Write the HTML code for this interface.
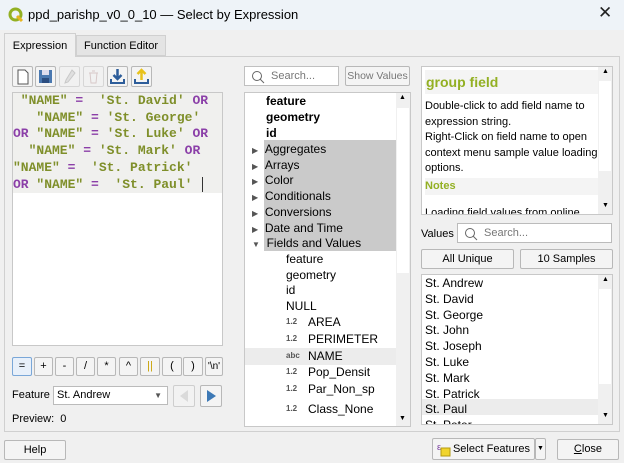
<!DOCTYPE html><html><head><style>
*{box-sizing:border-box;margin:0;padding:0}
body{width:624px;height:463px;overflow:hidden;background:#f0f0f0;font-family:"Liberation Sans",sans-serif;font-size:12px;color:#000;position:relative}
.a{position:absolute}
.btn{position:absolute;background:#f4f4f4;border:1px solid #b8b8b8;border-radius:2px;text-align:center;font-size:11px;white-space:nowrap;overflow:hidden}
.w{position:absolute;background:#fff;border:1px solid #c8c8c8}
.code{font-family:"Liberation Mono",monospace;font-size:13px;font-weight:bold;line-height:16.7px;white-space:pre;color:#7f8f2a}
.k{color:#8b3fa8}
.row{position:absolute;height:16px;line-height:16px;font-size:12px;white-space:nowrap}
.ico{font-size:8px;font-weight:bold;color:#555;display:inline-block;width:22px;vertical-align:top;line-height:15px}
</style></head><body>
<div class="a" style="left:0;top:0;width:624px;height:30px;background:#eef3f8"></div>
<svg class="a" style="left:8px;top:7px" width="16" height="16" viewBox="0 0 16 16"><circle cx="7.5" cy="7.5" r="5.5" fill="none" stroke="#93b023" stroke-width="3"/><path d="M9 9 L14 14" stroke="#e7b520" stroke-width="3"/></svg>
<div class="a" style="left:28px;top:7px;font-size:13px">ppd_parishp_v0_0_10 — Select by Expression</div>
<div class="a" style="left:598px;top:3px;font-size:17px;color:#222">✕</div>
<div class="a" style="left:4px;top:56px;width:616px;height:376px;border:1px solid #d0d0d0;background:#f0f0f0"></div>
<div class="a" style="left:4px;top:33px;width:72px;height:24px;background:#f0f0f0;border:1px solid #d0d0d0;border-bottom:none;font-size:11px;text-align:center;line-height:24px">Expression</div>
<div class="a" style="left:76px;top:35px;width:90px;height:21px;background:#e4e4e4;border:1px solid #d0d0d0;font-size:11px;text-align:center;line-height:21px">Function Editor</div>
<div class="btn" style="left:12px;top:66px;width:21px;height:21px"><svg width="19" height="19"><path d="M5 3h7l3 3v11H5z" fill="#fff" stroke="#555"/></svg></div>
<div class="btn" style="left:35px;top:66px;width:21px;height:21px"><svg width="19" height="19"><rect x="3" y="3" width="13" height="13" fill="#4a78b0"/><rect x="6" y="3" width="7" height="5" fill="#dde"/><rect x="6" y="11" width="7" height="5" fill="#2b4d80"/></svg></div>
<div class="btn" style="left:59px;top:66px;width:21px;height:21px;opacity:.45"><svg width="19" height="19"><path d="M12 3l3 3-7 9-3 1 1-3z" fill="#ccc" stroke="#999"/></svg></div>
<div class="btn" style="left:83px;top:66px;width:21px;height:21px;opacity:.45"><svg width="19" height="19"><path d="M5 6h9M6 6l1 10h5l1-10M8 4h3" fill="none" stroke="#b99"/></svg></div>
<div class="btn" style="left:107px;top:66px;width:21px;height:21px"><svg width="19" height="19"><path d="M9.5 2v9M5.5 8l4 4 4-4" fill="none" stroke="#2d5d9a" stroke-width="2.5"/><path d="M3 12v4h13v-4" fill="none" stroke="#2d5d9a" stroke-width="2"/></svg></div>
<div class="btn" style="left:131px;top:66px;width:21px;height:21px"><svg width="19" height="19"><path d="M9.5 13V4M5.5 7l4-4 4 4" fill="none" stroke="#e8c21c" stroke-width="2.5"/><path d="M3 12v4h13v-4" fill="none" stroke="#2d5d9a" stroke-width="2"/></svg></div>
<div class="w" style="left:12px;top:92px;width:211px;height:254px"></div>
<div class="a" style="left:13px;top:93px;width:209px;height:100px;background:#f0f0ee"></div>
<div class="a code" style="left:13px;top:93px"> "NAME" <span class="k">=</span>  'St. David' <span class="k">OR</span>
   "NAME" <span class="k">=</span> 'St. George'
<span class="k">OR</span> "NAME" <span class="k">=</span> 'St. Luke' <span class="k">OR</span>
  "NAME" <span class="k">=</span> 'St. Mark' <span class="k">OR</span>
"NAME" <span class="k">=</span>  'St. Patrick'
<span class="k">OR</span> "NAME" <span class="k">=</span>  'St. Paul' </div>
<div class="a" style="left:202px;top:177px;width:1px;height:15px;background:#333"></div>
<div class="btn" style="left:12px;top:357px;width:20px;height:19px;line-height:17px;border-color:#7aa7d8;background:#e8f0fa">=</div>
<div class="btn" style="left:34px;top:357px;width:19px;height:19px;line-height:17px">+</div>
<div class="btn" style="left:55px;top:357px;width:19px;height:19px;line-height:17px">-</div>
<div class="btn" style="left:76px;top:357px;width:19px;height:19px;line-height:17px">/</div>
<div class="btn" style="left:97px;top:357px;width:19px;height:19px;line-height:17px">*</div>
<div class="btn" style="left:119px;top:357px;width:19px;height:19px;line-height:17px">^</div>
<div class="btn" style="left:140px;top:357px;width:20px;height:19px;line-height:17px;color:#c8a000">||</div>
<div class="btn" style="left:162px;top:357px;width:20px;height:19px;line-height:17px">(</div>
<div class="btn" style="left:183px;top:357px;width:20px;height:19px;line-height:17px">)</div>
<div class="btn" style="left:205px;top:357px;width:18px;height:19px;line-height:17px;font-size:10px">'\n'</div>
<div class="a" style="left:12px;top:389px;font-size:11px">Feature</div>
<div class="w" style="left:53px;top:386px;width:115px;height:19px;border-color:#bbb;font-size:11px;line-height:17px;padding-left:3px">St. Andrew<span style="position:absolute;right:5px;top:0;font-size:8px;color:#555">▼</span></div>
<div class="btn" style="left:173px;top:385px;width:22px;height:22px;opacity:.6"><svg width="20" height="20"><path d="M14 4v12L6 10z" fill="#ccc"/></svg></div>
<div class="btn" style="left:200px;top:385px;width:22px;height:22px"><svg width="20" height="20"><path d="M6 4v12l9-6z" fill="#3d79b6"/></svg></div>
<div class="a" style="left:12px;top:413px;font-size:11px">Preview:&nbsp; 0</div>
<div class="btn" style="left:4px;top:440px;width:62px;height:20px;line-height:18px">Help</div>
<div class="w" style="left:244px;top:66px;width:95px;height:20px;border-color:#c0c0c0;color:#777;font-size:11px;line-height:18px;padding-left:26px">Search...<svg class="a" style="left:6px;top:3px" width="14" height="14"><circle cx="6" cy="6" r="4.5" fill="none" stroke="#666"/><path d="M9 9l4 4" stroke="#666"/></svg></div>
<div class="btn" style="left:345px;top:66px;width:65px;height:20px;line-height:18px;color:#777;font-size:10.5px">Show Values</div>
<div class="w" style="left:244px;top:92px;width:167px;height:335px"></div>
<div class="a" style="left:264px;top:140px;width:132px;height:111px;background:#cacaca"></div>
<div class="a" style="left:396px;top:93px;width:14px;height:333px;background:#f0f0f0"></div>
<div class="a" style="left:397px;top:108px;width:12px;height:165px;background:#fff"></div>
<div class="a" style="left:399px;top:94px;font-size:7px">▲</div>
<div class="a" style="left:399px;top:415px;font-size:7px">▼</div>
<div class="row" style="left:266px;top:93px;font-weight:bold">feature</div>
<div class="row" style="left:266px;top:109px;font-weight:bold">geometry</div>
<div class="row" style="left:266px;top:125px;font-weight:bold">id</div>
<div class="row" style="left:252px;top:141px"><span style="font-size:8px;color:#555">▶</span>&nbsp;&nbsp;Aggregates</div>
<div class="row" style="left:252px;top:157px"><span style="font-size:8px;color:#555">▶</span>&nbsp;&nbsp;Arrays</div>
<div class="row" style="left:252px;top:172px"><span style="font-size:8px;color:#555">▶</span>&nbsp;&nbsp;Color</div>
<div class="row" style="left:252px;top:188px"><span style="font-size:8px;color:#555">▶</span>&nbsp;&nbsp;Conditionals</div>
<div class="row" style="left:252px;top:204px"><span style="font-size:8px;color:#555">▶</span>&nbsp;&nbsp;Conversions</div>
<div class="row" style="left:252px;top:220px"><span style="font-size:8px;color:#555">▶</span>&nbsp;&nbsp;Date and Time</div>
<div class="row" style="left:252px;top:235px"><span style="font-size:8px;color:#555">▼</span>&nbsp;&nbsp;Fields and Values</div>
<div class="row" style="left:286px;top:251px">feature</div>
<div class="row" style="left:286px;top:267px">geometry</div>
<div class="row" style="left:286px;top:282px">id</div>
<div class="row" style="left:286px;top:298px">NULL</div>
<div class="row" style="left:286px;top:314px"><span class="ico">1.2</span>AREA</div>
<div class="row" style="left:286px;top:331px"><span class="ico">1.2</span>PERIMETER</div>
<div class="a" style="left:245px;top:348px;width:151px;height:17px;background:#ececec"></div>
<div class="row" style="left:286px;top:348px"><span class="ico">abc</span>NAME</div>
<div class="row" style="left:286px;top:364px"><span class="ico">1.2</span>Pop_Densit</div>
<div class="row" style="left:286px;top:381px"><span class="ico">1.2</span>Par_Non_sp</div>
<div class="row" style="left:286px;top:401px"><span class="ico">1.2</span>Class_None</div>
<div class="w" style="left:421px;top:66px;width:192px;height:149px;overflow:hidden">
<div class="a" style="left:3px;top:3px;width:173px;height:24px;background:#f4f4f4;color:#93b023;font-weight:bold;font-size:14px;line-height:24px;padding-left:1px">group field</div>
<div class="a" style="left:3px;top:32px;width:173px;font-size:11px;line-height:15.5px">Double-click to add field name to expression string.<br>Right-Click on field name to open context menu sample value loading options.</div>
<div class="a" style="left:3px;top:111px;width:173px;height:17px;background:#f4f4f4;color:#93b023;font-weight:bold;font-size:11px;line-height:17px">Notes</div>
<div class="a" style="left:3px;top:140px;font-size:11px">Loading field values from online</div>
<div class="a" style="left:176px;top:0;width:14px;height:147px;background:#f0f0f0"></div>
<div class="a" style="left:177px;top:14px;width:12px;height:90px;background:#fff"></div>
<div class="a" style="left:180px;top:1px;font-size:7px">▲</div>
<div class="a" style="left:180px;top:135px;font-size:7px">▼</div>
</div>
<div class="a" style="left:421px;top:228px;font-size:11px">Values</div>
<div class="w" style="left:457px;top:223px;width:155px;height:20px;border-color:#bbb;color:#777;font-size:11px;line-height:18px;padding-left:26px">Search...<svg class="a" style="left:6px;top:3px" width="14" height="14"><circle cx="6" cy="6" r="4.5" fill="none" stroke="#666"/><path d="M9 9l4 4" stroke="#666"/></svg></div>
<div class="btn" style="left:421px;top:249px;width:93px;height:20px;line-height:18px">All Unique</div>
<div class="btn" style="left:520px;top:249px;width:93px;height:20px;line-height:18px">10 Samples</div>
<div class="w" style="left:421px;top:274px;width:192px;height:151px;overflow:hidden">
<div class="a" style="left:0;top:124px;width:176px;height:16px;background:#ececec"></div>
<div class="a" style="left:3px;top:1px;font-size:12px;line-height:15.8px">St. Andrew<br>St. David<br>St. George<br>St. John<br>St. Joseph<br>St. Luke<br>St. Mark<br>St. Patrick<br>St. Paul<br>St. Peter</div>
<div class="a" style="left:176px;top:0;width:14px;height:149px;background:#f0f0f0"></div>
<div class="a" style="left:177px;top:14px;width:12px;height:95px;background:#fff"></div>
<div class="a" style="left:180px;top:1px;font-size:7px">▲</div>
<div class="a" style="left:180px;top:137px;font-size:7px">▼</div>
</div>
<div class="btn" style="left:432px;top:438px;width:103px;height:22px;line-height:20px;padding-left:16px">Select Features
<svg class="a" style="left:4px;top:3px" width="14" height="15"><rect x="4" y="6" width="9" height="8" fill="#f1d42c" stroke="#b59a10"/><text x="0" y="8" font-size="9" fill="#7a3fa0" font-family="Liberation Sans">ε</text></svg></div>
<div class="btn" style="left:535px;top:438px;width:11px;height:22px;line-height:20px;font-size:7px">▼</div>
<div class="btn" style="left:557px;top:439px;width:62px;height:21px;line-height:19px"><u>C</u>lose</div>
</body></html>
